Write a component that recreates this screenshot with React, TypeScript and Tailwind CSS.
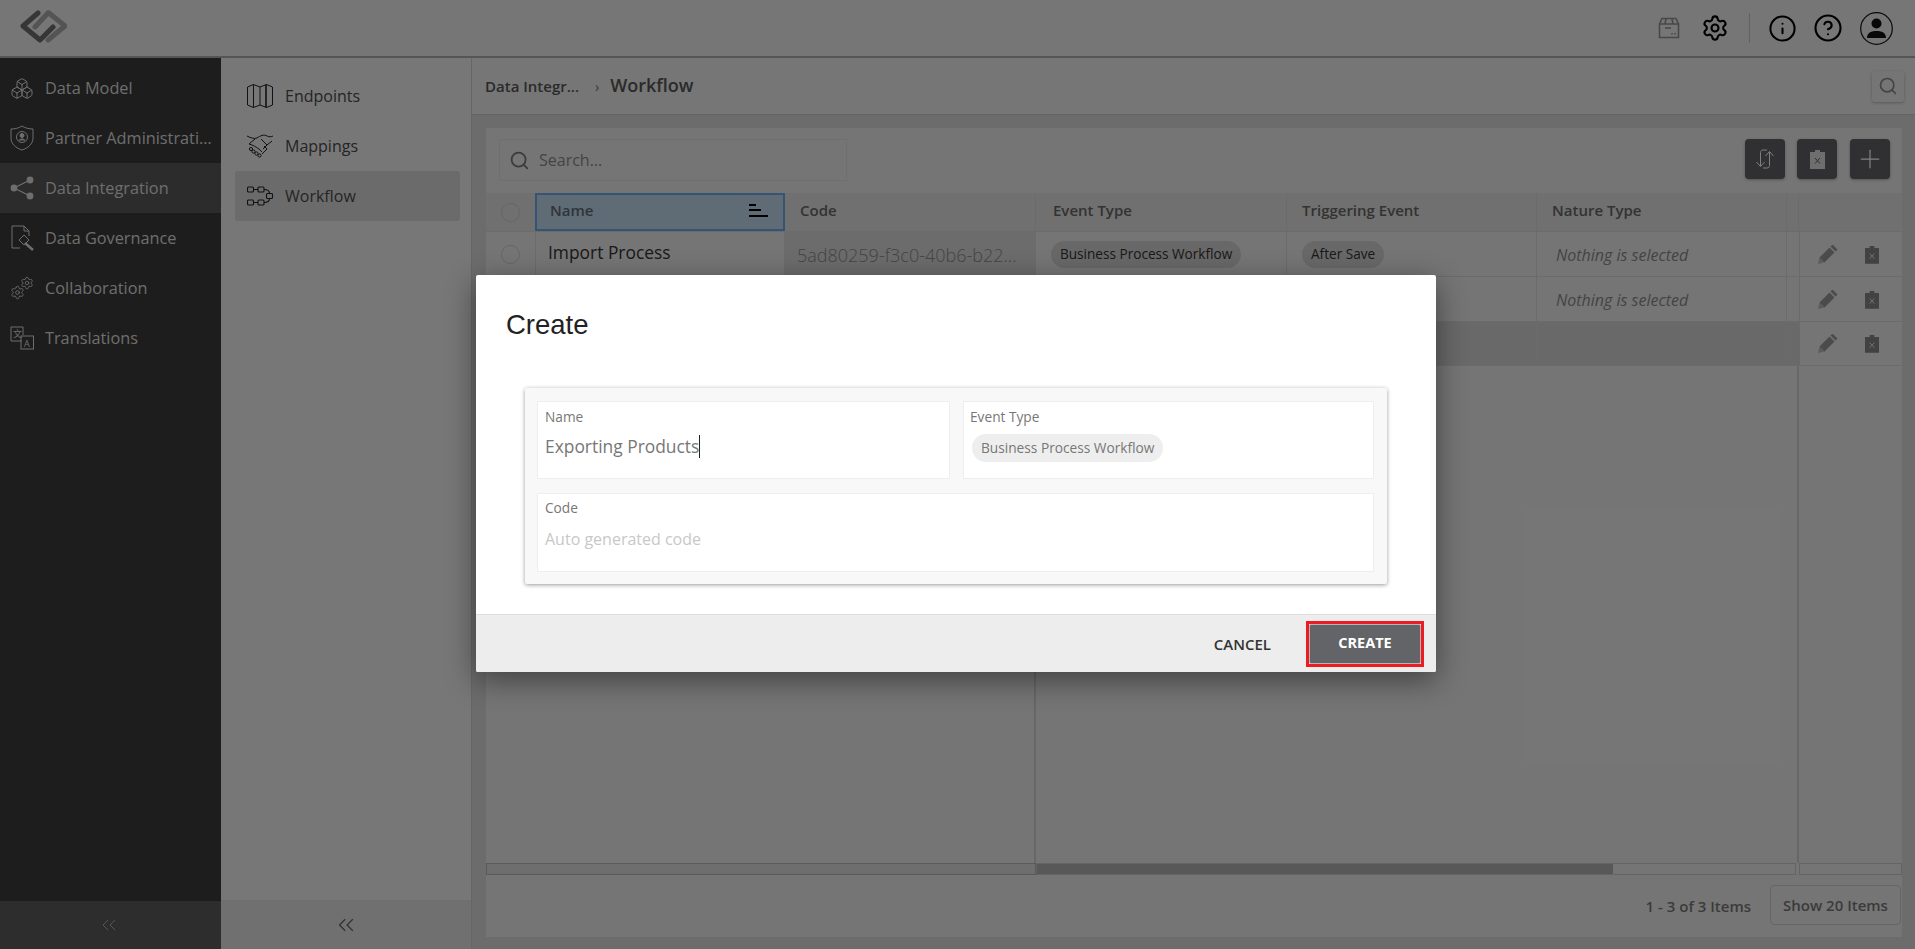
import { Boxes, ChevronsLeft, CircleHelp, Info, Plus, Search, Settings } from "lucide-react";

const sans = "font-['Open_Sans',sans-serif]";

function Logo() {
  return (
    <svg width="47" height="36" viewBox="0 0 47 36" fill="none" strokeWidth="5" strokeLinejoin="round" strokeLinecap="round">
      <path d="M28 5 L15 19 M29 5 L45 18 L28 32" stroke="#a8a8a8" />
      <path d="M18 5 L3 18 L20 32 L33 19" stroke="#6c6c6c" />
    </svg>
  );
}

function ShieldIcon() {
  return (
    <svg width="24" height="26" viewBox="0 0 24 26" fill="none" stroke="currentColor" strokeWidth="1">
      <path d="M12 1 C15 3 19 4 23 4 L23 13 C23 19 18 23 12 25 C6 23 1 19 1 13 L1 4 C5 4 9 3 12 1Z" />
      <circle cx="12" cy="12" r="5.5" />
      <circle cx="12" cy="10.5" r="2" fill="currentColor" />
      <path d="M9 15.5 C9.5 13.5 14.5 13.5 15 15.5" fill="currentColor" />
    </svg>
  );
}

function ShareIcon() {
  return (
    <svg width="24" height="24" viewBox="0 0 24 24" fill="currentColor" stroke="none">
      <circle cx="4" cy="12" r="3.4" />
      <circle cx="20" cy="4" r="3.4" />
      <circle cx="20" cy="20" r="3.4" />
      <path d="M4 12 L20 4 M4 12 L20 20" stroke="currentColor" strokeWidth="1.2" />
    </svg>
  );
}

function GovernanceIcon() {
  return (
    <svg width="24" height="26" viewBox="0 0 24 26" fill="none" stroke="currentColor" strokeWidth="1">
      <path d="M10 23 L2 23 L2 1 L14 1 L19 6 L19 11" />
      <path d="M14 1 L14 6 L19 6" />
      <path d="M9 15 L14 10 L19 15 L14 20Z" />
      <path d="M15 18 L23 25" strokeWidth="2.4" />
    </svg>
  );
}

function GearsIcon() {
  return (
    <div className="relative w-[24px] h-[24px]">
      <Settings size={15} strokeWidth={1.4} className="absolute left-0 bottom-0" />
      <Settings size={14} strokeWidth={1.4} className="absolute right-0 top-0" />
    </div>
  );
}

function TranslateIcon() {
  return (
    <svg width="24" height="24" viewBox="0 0 24 24" fill="none" stroke="currentColor" strokeWidth="1">
      <path d="M12 15 L1 15 L1 1 L13 1 L13 9" />
      <rect x="11" y="10" width="12.5" height="13" />
      <text x="3" y="11" fontSize="9" fill="currentColor" stroke="none" fontFamily="'Noto Sans CJK SC', sans-serif">文</text>
      <text x="14" y="20.5" fontSize="9" fill="currentColor" stroke="none" fontFamily="'Open Sans', sans-serif">A</text>
    </svg>
  );
}

function MapIcon() {
  return (
    <svg width="26" height="24" viewBox="0 0 26 24" fill="none" stroke="currentColor" strokeWidth="1">
      <path d="M0.5 3 L6.5 0.5 L13 3 L19.5 0.5 L25.5 3 L25.5 21 L19.5 23.5 L13 21 L6.5 23.5 L0.5 21Z" />
      <path d="M6.5 0.5 L6.5 23.5 M13 3 L13 21" />
      <path d="M19 0.5 L19 23.5" strokeWidth="1.6" />
    </svg>
  );
}

function HandshakeIcon() {
  return (
    <svg width="26" height="24" viewBox="0 0 26 24" fill="none" stroke="currentColor" strokeWidth="1">
      <path d="M0 2 C4 4 7 5 10 4 C13 2 17 0 20 2 C22 3 24 3 26 2" />
      <path d="M8 5 L2 10 M2 10 C6 11 9 13 12 15 L15 18 M14 5 L20 11 L25 7 M20 11 L16 15 M17 12 L20 15 L15 20" />
      <circle cx="4" cy="15" r="1.6" />
      <circle cx="6.5" cy="17.5" r="1.6" />
      <circle cx="9.5" cy="19.5" r="1.6" />
      <circle cx="12.5" cy="21.5" r="1.6" />
    </svg>
  );
}

function WorkflowIcon() {
  return (
    <svg width="26" height="20" viewBox="0 0 26 20" fill="none" stroke="currentColor" strokeWidth="1.1">
      <rect x="0.5" y="1" width="6" height="5" rx="1" />
      <rect x="11" y="1" width="6" height="5" rx="1" />
      <rect x="0.5" y="14" width="6" height="5" rx="1" />
      <rect x="11" y="14" width="6" height="5" rx="1" />
      <rect x="19.5" y="7.5" width="6" height="5" rx="1" />
      <path d="M6.5 3.5 L11 3.5 M6.5 16.5 L11 16.5 M17 3.5 C20 3.5 22.5 4.5 22.5 7.5 M17 16.5 C20 16.5 22.5 15.5 22.5 12.5" />
    </svg>
  );
}

function PackageIcon() {
  return (
    <svg width="22" height="22" viewBox="0 0 22 22" fill="none" stroke="#909090" strokeWidth="1.6">
      <path d="M1.5 7 L4 1.5 L18 1.5 L20.5 7 L20.5 20.5 L1.5 20.5Z" />
      <path d="M1.5 7 L20.5 7 M8 1.5 L7 7 M14 1.5 L15 7 M7 11 L13 11" />
      <path d="M14 16 L14 17.5 M17 16 L17 17.5" />
    </svg>
  );
}

function AvatarIcon() {
  return (
    <svg width="33" height="33" viewBox="0 0 33 33" fill="none">
      <circle cx="16.5" cy="16.5" r="15.8" stroke="#111" strokeWidth="1.2" />
      <circle cx="16.5" cy="11.5" r="5" fill="#111" />
      <path d="M7 26 C7 20 12 19 16.5 19 C21 19 26 20 26 26Z" fill="#111" />
    </svg>
  );
}

function SwapIcon() {
  return (
    <svg width="20" height="20" viewBox="0 0 20 20" fill="none" stroke="#ffffff" strokeWidth="1">
      <path d="M12 1 L8 1 C6.5 1 5.5 2 5.5 3.5 L5.5 17 M1.5 13 L5.5 17.5 L9.5 13" />
      <path d="M8 19 L12 19 C13.5 19 14.5 18 14.5 16.5 L14.5 3 M10.5 7 L14.5 2.5 L18.5 7" />
    </svg>
  );
}

function ClearIcon({ fill, cross, w, h }: { fill: string; cross: string; w: number; h: number }) {
  return (
    <svg width={w} height={h} viewBox="0 0 15 20" fill="none">
      <path d="M0 3 L5 3 L5 1 L10 1 L10 3 L15 3 L15 20 L0 20Z" fill={fill} />
      <path d="M5 9 L10 14.5 M10 9 L5 14.5" stroke={cross} strokeWidth="1" />
    </svg>
  );
}

function PencilIcon() {
  return (
    <svg width="20" height="19" viewBox="0 0 20 19" fill="none">
      <path d="M0 19 L1.5 12.5 L6.5 17.5Z" fill="#b8b8b8" />
      <path d="M4 15 L14 5" stroke="#969696" strokeWidth="7" />
      <path d="M15 4 L17 2" stroke="#969696" strokeWidth="7" />
    </svg>
  );
}

function SortIcon() {
  return (
    <svg width="19" height="14" viewBox="0 0 19 14" fill="#000">
      <rect x="0" y="0" width="7" height="2" />
      <rect x="0" y="5" width="12" height="2" />
      <rect x="0" y="11" width="19" height="2" />
    </svg>
  );
}

const mainNav = [
  { label: "Data Model", icon: <Boxes size={25} strokeWidth={1} /> },
  { label: "Partner Administration", icon: <ShieldIcon /> },
  { label: "Data Integration", icon: <ShareIcon />, active: true },
  { label: "Data Governance", icon: <GovernanceIcon /> },
  { label: "Collaboration", icon: <GearsIcon /> },
  { label: "Translations", icon: <TranslateIcon /> },
];

const subNav = [
  { label: "Endpoints", icon: <MapIcon /> },
  { label: "Mappings", icon: <HandshakeIcon /> },
  { label: "Workflow", icon: <WorkflowIcon />, active: true },
];

const columns = "grid grid-cols-[49px_250px_251px_251px_250px_250px_12px_103px]";

function Chip({ children }: { children: string }) {
  return (
    <span className="inline-flex items-center h-[27px] px-[9px] rounded-full bg-[#d0d0d0] text-[13.6px] text-[#333] whitespace-nowrap">
      {children}
    </span>
  );
}

function RowActions() {
  return (
    <div className="flex items-center h-full border-l border-[#d4d4d4]">
      <div className="ml-[18px]"><PencilIcon /></div>
      <div className="ml-[27px]"><ClearIcon fill="#848484" cross="#e8e8e8" w={14} h={19} /></div>
    </div>
  );
}

function Row({ name, code, first, dark }: { name?: string; code?: string; first?: boolean; dark?: boolean }) {
  const h = dark ? "h-[44px]" : "h-[45px]";
  const bg = dark ? "bg-[#d2d2d2]" : "";
  const cell = `${bg} border-b border-r border-[#d6d6d6] flex items-center`;
  return (
    <div className={`${columns} ${h}`}>
      <div className="flex items-center justify-center border-b border-[#d6d6d6]">
        <span className="w-[19px] h-[19px] rounded-full border border-[#cccccc]" />
      </div>
      <div className={`${cell} border-l pl-[12px] pb-[4px] text-[17.4px] text-[#333]`}>{name}</div>
      <div className={`${cell} bg-[#d8d8d8] pl-[12px] pt-[3px] text-[18px] font-light text-[#8a8a8a] whitespace-nowrap overflow-hidden`}>{code}</div>
      <div className={`${cell} pl-[15px]`}>{first && <Chip>Business Process Workflow</Chip>}</div>
      <div className={`${cell} pl-[15px]`}>{first && <Chip>After Save</Chip>}</div>
      <div className={`${cell} pl-[19px] pt-[2px] text-[16px] italic text-[#888]`}>{dark ? "" : "Nothing is selected"}</div>
      <div className={`${bg} border-b border-[#d6d6d6]`} />
      <div className="border-b border-[#d6d6d6]"><RowActions /></div>
    </div>
  );
}

export default function App() {
  return (
    <div className={`${sans} relative w-[1915px] h-[949px] overflow-hidden flex flex-col bg-[#d8d8d8]`}>
      {/* top bar */}
      <header className="h-[58px] shrink-0 bg-[#ececec] border-b-2 border-[#aaaaaa] flex items-center">
        <div className="ml-[20px] mt-[-4px]"><Logo /></div>
        <div className="ml-auto flex items-center text-black">
          <PackageIcon />
          <div className="ml-[21px]"><Settings size={28} strokeWidth={1.8} /></div>
          <div className="ml-[20px] w-px h-[30px] bg-[#c4c4c4]" />
          <div className="ml-[18px]"><Info size={29} strokeWidth={1.7} /></div>
          <div className="ml-[16px]"><CircleHelp size={30} strokeWidth={1.7} /></div>
          <div className="ml-[17px] mr-[22px]"><AvatarIcon /></div>
        </div>
      </header>

      <div className="flex flex-1 min-h-0">
        {/* main nav */}
        <aside className="w-[221px] shrink-0 bg-[#3a3a3a] flex flex-col">
          <nav className="flex-1 pt-[5px]">
            {mainNav.map((item) => (
              <div
                key={item.label}
                className={`h-[50px] flex items-center gap-[11px] pl-[10px] pr-[8px] text-[16.3px] text-[#dcdcdc] ${item.active ? "bg-[#58585a]" : ""}`}
              >
                <span className="w-[24px] flex justify-center shrink-0">{item.icon}</span>
                <span className="truncate">{item.label}</span>
              </div>
            ))}
          </nav>
          <div className="h-[48px] bg-[#5a5a5a] flex items-center justify-center pr-[4px] text-[#aaaaaa]">
            <ChevronsLeft size={24} strokeWidth={1} />
          </div>
        </aside>

        {/* sub nav */}
        <aside className="w-[250px] shrink-0 bg-[#eeeeee] flex flex-col">
          <nav className="flex-1 pt-[13px] px-[14px] pr-[11px]">
            {subNav.map((item) => (
              <div
                key={item.label}
                className={`h-[50px] flex items-center gap-[12px] pl-[12px] rounded-[3px] text-[16px] text-[#4a4a4a] ${item.active ? "bg-[#d6d6d6]" : ""}`}
              >
                <span className="text-[#222] w-[26px] flex justify-center">{item.icon}</span>
                {item.label}
              </div>
            ))}
          </nav>
          <div className="h-[49px] bg-[#e0e0e0] flex items-center justify-center text-[#666]">
            <ChevronsLeft size={26} strokeWidth={1.2} />
          </div>
        </aside>

        {/* content */}
        <main className="flex-1 min-w-0 flex flex-col border-l border-[#cccccc]">
          <div className="h-[57px] shrink-0 bg-[#ececec] border-b border-[#c8c8c8] flex items-center pl-[13px] pr-[11px]">
            <span className="text-[15px] font-semibold text-[#555] w-[99px] whitespace-nowrap">Data Integr...</span>
            <span className="ml-[11px] text-[14px] text-[#777]">›</span>
            <span className="ml-[11px] mt-[-1px] text-[18px] font-semibold text-[#555]">Workflow</span>
            <button className="ml-auto w-[32px] h-[31px] rounded-[3px] bg-[#eaeaea] shadow-[0_1px_3px_rgba(0,0,0,0.25)] flex items-center justify-center text-[#888]">
              <Search size={20} strokeWidth={2} />
            </button>
          </div>

          <div className="flex-1 min-h-0 pl-[14px] pr-[13px] pt-[13px] pb-[12px]">
            <div className="h-full bg-[#ebebeb] flex flex-col">
              <div className="h-[65px] shrink-0 flex items-start justify-between pt-[11px] pl-[13px] pr-[12px]">
                <div className="w-[348px] h-[42px] border border-[#dedede] flex items-center gap-[9px] pl-[9px] text-[16px] text-[#888]">
                  <Search size={21} strokeWidth={2} className="text-[#777]" />
                  Search...
                </div>
                <div className="flex">
                  <button className="w-[40px] h-[40px] rounded-[4px] bg-[#606064] shadow-[0_1px_3px_rgba(0,0,0,0.3)] flex items-center justify-center"><SwapIcon /></button>
                  <button className="ml-[12px] w-[40px] h-[40px] rounded-[4px] bg-[#606064] shadow-[0_1px_3px_rgba(0,0,0,0.3)] flex items-center justify-center"><ClearIcon fill="#dcdcdc" cross="#606064" w={15} h={20} /></button>
                  <button className="ml-[13px] w-[40px] h-[40px] rounded-[4px] bg-[#606064] shadow-[0_1px_3px_rgba(0,0,0,0.3)] flex items-center justify-center text-white"><Plus size={30} strokeWidth={1} /></button>
                </div>
              </div>

              <div className={`${columns} h-[39px] shrink-0 bg-[#e0e0e0] text-[15px] font-semibold text-[#666] border-b border-[#d6d6d6]`}>
                <div className="flex items-center justify-center">
                  <span className="w-[19px] h-[19px] rounded-full border border-[#cccccc]" />
                </div>
                <div className="flex items-center justify-between pl-[13px] pb-[3px] pr-[15px] bg-[#bed6ea] border-2 border-[#6aa8e8] text-[#5f6b75]">
                  Name
                  <SortIcon />
                </div>
                <div className="flex items-center pl-[15px] pb-[3px] border-r border-[#d6d6d6]">Code</div>
                <div className="flex items-center pl-[17px] pb-[3px] border-r border-[#d6d6d6]">Event Type</div>
                <div className="flex items-center pl-[15px] pb-[3px] border-r border-[#d6d6d6]">Triggering Event</div>
                <div className="flex items-center pl-[15px] pb-[3px] border-r border-[#d6d6d6]">Nature Type</div>
                <div className="border-r border-[#d6d6d6]" />
                <div />
              </div>

              <Row first name="Import Process" code="5ad80259-f3c0-40b6-b22..." />
              <Row />
              <Row dark />

              <div className="flex-1 min-h-0 flex">
                <div className="w-[550px] border-r-2 border-[#cfcfcf]" />
                <div className="w-[763px] border-r-2 border-[#cfcfcf]" />
              </div>

              {/* scrollbars */}
              <div className="h-[12px] shrink-0 flex">
                <div className="w-[550px] bg-[#dcdcdc] border border-[#b4b4b4]" />
                <div className="w-[760px] border border-[#c8c8c8]">
                  <div className="w-[576px] h-full bg-[#b0b0b0]" />
                </div>
                <div className="w-[3px]" />
                <div className="flex-1 border border-[#c8c8c8]" />
              </div>

              <div className="h-[62px] shrink-0 flex items-center justify-end pr-px text-[15px] font-semibold text-[#777]">
                1 - 3 of 3 Items
                <div className="ml-[19px] w-[131px] h-[40px] mt-[-2px] rounded-[4px] border border-[#cacaca] flex items-center justify-center">
                  Show 20 Items
                </div>
              </div>
            </div>
          </div>
        </main>
      </div>

      {/* backdrop */}
      <div className="absolute inset-0 bg-black/50" />

      {/* create dialog */}
      <div className="absolute left-[476px] top-[275px] w-[960px] h-[397px] bg-white rounded-[2px] shadow-[0_8px_30px_rgba(0,0,0,0.45)] flex flex-col">
        <h2 className="h-[113px] shrink-0 pl-[30px] pt-[32px] font-['Liberation_Sans',sans-serif] text-[27.5px] leading-[36px] text-[#222]">
          Create
        </h2>
        <div className="flex-1 px-[49px]">
          <div className="h-[196px] bg-[#f8f8f8] rounded-[2px] shadow-[0_1px_4px_rgba(0,0,0,0.4)] pt-[13px] px-[12px] pr-[13px]">
            <div className="flex gap-[13px]">
              <div className="w-[413px] h-[78px] bg-white border border-[#eeeeee] pl-[7px]">
                <div className="pt-[5px] text-[13.7px] leading-[20px] text-[#777]">Name</div>
                <div className="mt-[6px] text-[17.4px] leading-[26px] text-[#777] flex items-center">
                  Exporting Products
                  <span className="w-px h-[23px] bg-[#222]" />
                </div>
              </div>
              <div className="flex-1 h-[78px] bg-white border border-[#eeeeee] pl-[6px]">
                <div className="pt-[5px] text-[13.7px] leading-[20px] text-[#777]">Event Type</div>
                <span className="mt-[7px] ml-[2px] inline-flex items-center h-[28px] px-[9px] rounded-full bg-[#eeeeee] text-[13.7px] text-[#777]">
                  Business Process Workflow
                </span>
              </div>
            </div>
            <div className="mt-[14px] h-[79px] bg-white border border-[#eeeeee] pl-[7px]">
              <div className="pt-[4px] text-[13.7px] leading-[20px] text-[#777]">Code</div>
              <div className="mt-[8px] text-[16px] leading-[26px] text-[#c8c8c8]">Auto generated code</div>
            </div>
          </div>
        </div>
        <div className="h-[58px] shrink-0 bg-[#ededed] border-t border-[#dddddd] rounded-b-[2px] flex items-center justify-end pr-[12px]">
          <button className="mr-[35px] mt-[2px] text-[15px] font-semibold text-[#333]">CANCEL</button>
          <div className="border-[3px] border-[#ed1c24]">
            <button className="w-[112px] h-[40px] pb-[2px] bg-[#636467] border border-[#b5b5b5] rounded-[2px] text-[14.5px] font-bold text-white">
              CREATE
            </button>
          </div>
        </div>
      </div>
    </div>
  );
}
